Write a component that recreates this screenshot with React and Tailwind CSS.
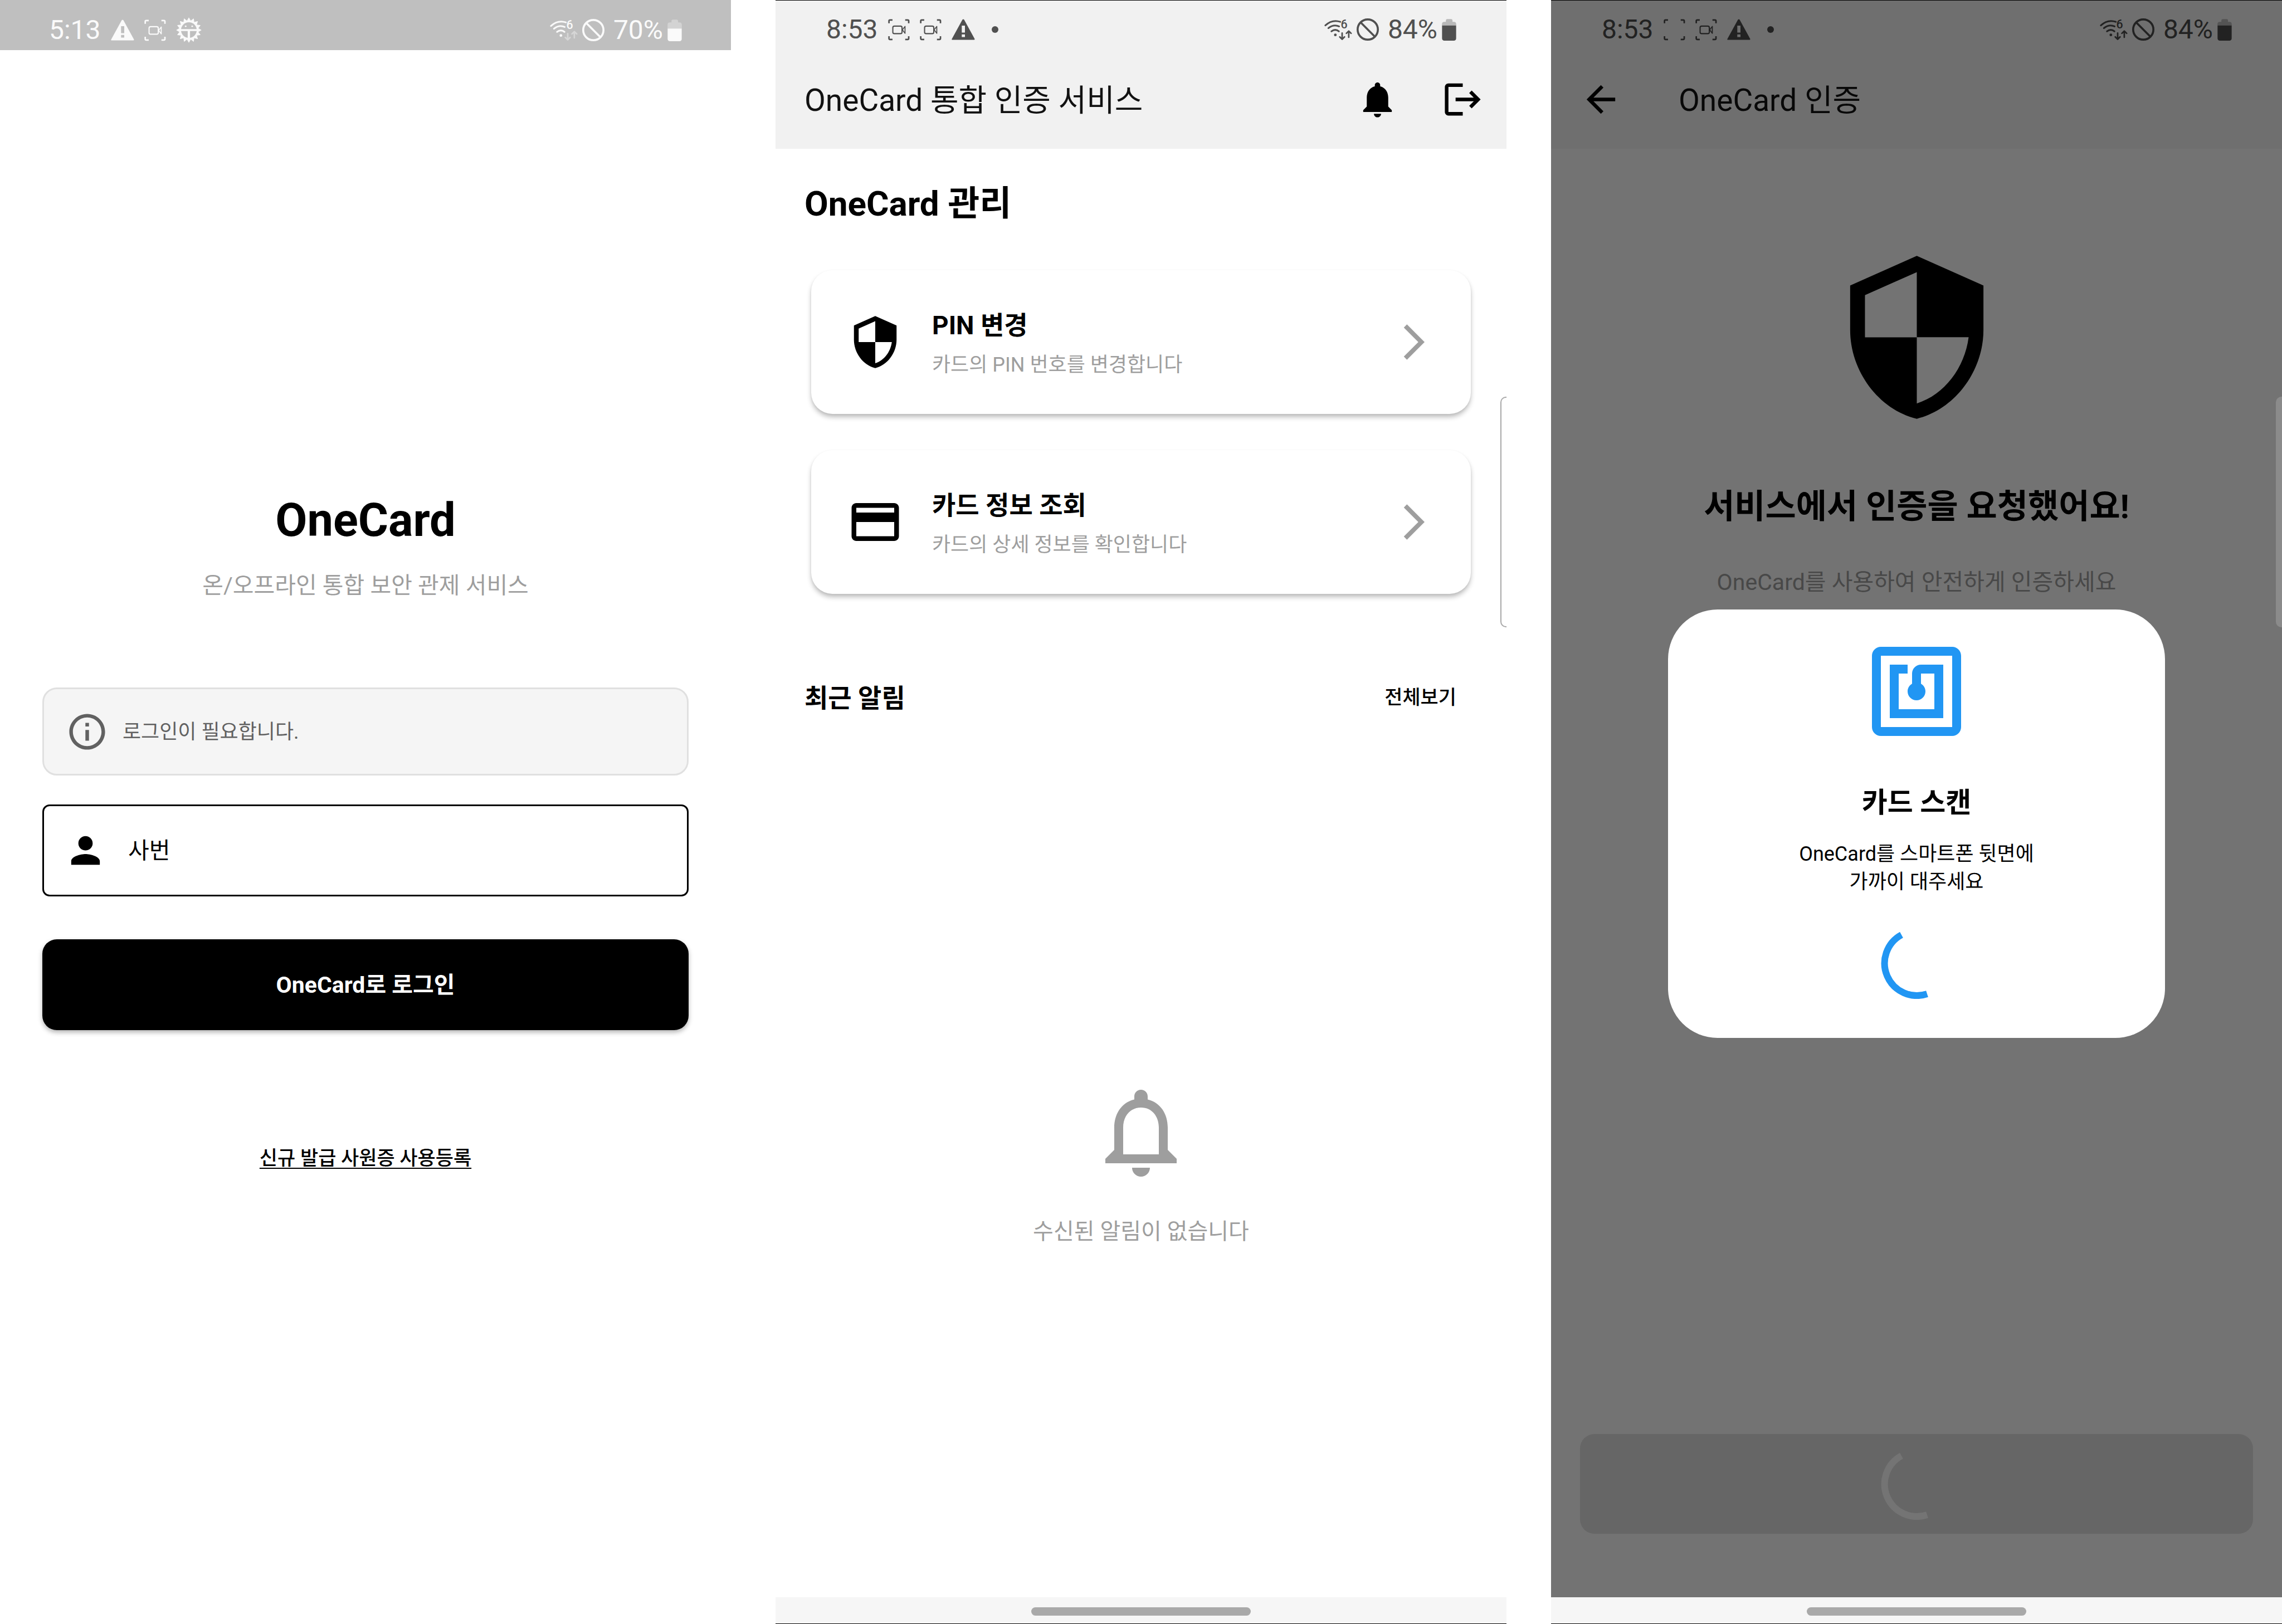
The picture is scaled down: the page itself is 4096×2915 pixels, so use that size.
const ICONS = {
  bell: "M12 22c1.1 0 2-.9 2-2h-4c0 1.1.89 2 2 2zm6-6v-5c0-3.07-1.64-5.64-4.5-6.32V4c0-.83-.67-1.5-1.5-1.5s-1.5.67-1.5 1.5v.68C7.63 5.36 6 7.92 6 11v5l-2 2v1h16v-1l-2-2z",
  bellOutline:
    "M12 22c1.1 0 2-.9 2-2h-4c0 1.1.9 2 2 2zm6-6v-5c0-3.07-1.63-5.64-4.5-6.32V4c0-.83-.67-1.5-1.5-1.5s-1.5.67-1.5 1.5v.68C7.64 5.36 6 7.92 6 11v5l-2 2v1h16v-1l-2-2zm-2 1H8v-6c0-2.48 1.51-4.5 4-4.5s4 2.02 4 4.5v6z",
  logout:
    "M17 7l-1.41 1.41L18.17 11H8v2h10.17l-2.58 2.58L17 17l5-5zM4 5h8V3H4c-1.1 0-2 .9-2 2v14c0 1.1.9 2 2 2h8v-2H4V5z",
  shield:
    "M12 1L3 5v6c0 5.55 3.84 10.74 9 12 5.16-1.26 9-6.45 9-12V5l-9-4zm0 10.99h7c-.53 4.12-3.28 7.79-7 8.94V12H5V6.3l7-3.11v8.8z",
  card: "M20 4H4c-1.11 0-1.99.89-1.99 2L2 18c0 1.11.89 2 2 2h16c1.11 0 2-.89 2-2V6c0-1.11-.89-2-2-2zm0 14H4v-6h16v6zm0-10H4V6h16v2z",
  chevron: "M6.23 20.23L8 22l10-10L8 2 6.23 3.77 14.46 12z",
  back: "M20 11H7.83l5.59-5.59L12 4l-8 8 8 8 1.41-1.41L7.83 13H20v-2z",
  nfc: "M20 2H4c-1.1 0-2 .9-2 2v16c0 1.1.9 2 2 2h16c1.1 0 2-.9 2-2V4c0-1.1-.9-2-2-2zm0 18H4V4h16v16zM18 6h-5c-1.1 0-2 .9-2 2v2.28c-.6.35-1 .98-1 1.72 0 1.1.9 2 2 2s2-.9 2-2c0-.74-.4-1.38-1-1.72V8h3v8H8V8h2V6H6v12h12V6z",
  info: "M11 7h2v2h-2zm0 4h2v6h-2zm1-9C6.48 2 2 6.48 2 12s4.48 10 10 10 10-4.48 10-10S17.52 2 12 2zm0 18c-4.41 0-8-3.59-8-8s3.59-8 8-8 8 3.59 8 8-3.59 8-8 8z",
  person:
    "M12 12c2.21 0 4-1.79 4-4s-1.79-4-4-4-4 1.79-4 4 1.79 4 4 4zm0 2c-2.67 0-8 1.34-8 4v2h16v-2c0-2.66-5.33-4-8-4z",
};

function Icon({ name, className }) {
  return (
    <svg viewBox="0 0 24 24" fill="currentColor" aria-hidden="true" className={`shrink-0 ${className}`}>
      <path d={ICONS[name]} />
    </svg>
  );
}

function WarningIcon() {
  return (
    <svg viewBox="416 86 140 126" fill="currentColor" aria-hidden="true" className="h-[38px] w-[42px]">
      <path
        fillRule="evenodd"
        d="M481 90q5-6 10 0l63 115q2 6-4 6H422q-7 0-4-6zM477 126v41h19v-41zM477 178v16h19v-16z"
      />
    </svg>
  );
}

function CaptureIcon({ empty }) {
  return (
    <svg viewBox="612 86 129 130" fill="none" stroke="currentColor" aria-hidden="true" className="h-[39px] w-[39px]">
      <path strokeWidth="9" d="M617 112V98q0-6 6-6h15M714 92h15q6 0 6 6v14M735 189v14q0 6-6 6h-15M638 209h-15q-6 0-6-6v-14" />
      {!empty && (
        <>
          <rect x="640" y="129" width="55" height="45" rx="9" strokeWidth="7" />
          <path strokeWidth="6" strokeLinejoin="round" d="M697 151l16-20v41z" />
        </>
      )}
    </svg>
  );
}

const GEAR_TEETH = Array.from({ length: 32 }, (_, i) => {
  const angle = (i * Math.PI) / 16 + Math.PI / 16;
  const radius = i % 2 ? 73 : 55;
  return `${(865 + radius * Math.cos(angle)).toFixed(1)},${(151 + radius * Math.sin(angle)).toFixed(1)}`;
}).join(" ");

function GearFaceIcon() {
  return (
    <svg viewBox="788 74 154 154" fill="currentColor" aria-hidden="true" className="h-[46px] w-[46px]">
      <mask id="gear-face">
        <rect x="788" y="74" width="154" height="154" fill="white" />
        <circle cx="865" cy="151" r="47" fill="black" />
      </mask>
      <polygon points={GEAR_TEETH} stroke="currentColor" strokeWidth="4" strokeLinejoin="round" mask="url(#gear-face)" />
      <path d="M816 145h98v12h-42v42h-14v-42h-42z" />
      <circle cx="846" cy="128" r="5" />
      <circle cx="885" cy="128" r="5" />
    </svg>
  );
}

function WifiIcon({ arrows }) {
  return (
    <svg
      viewBox="74 86 164 128"
      fill="none"
      stroke="currentColor"
      strokeLinecap="round"
      aria-hidden="true"
      className="h-[39px] w-[50px] overflow-visible"
    >
      <path strokeWidth="10" d="M80 124Q121 87 168 103M98 140Q130 115 161 130M116 159Q139 142 160 159" />
      <circle cx="139" cy="180" r="8" fill="currentColor" stroke="none" />
      <text x="171" y="143" fontSize="70" fontWeight="500" fill="currentColor" stroke="none">
        6
      </text>
      <path className={arrows} strokeWidth="9" strokeLinejoin="round" d="M179 169v36M165 192l14 14 14-14M218 194v-36M204 171l14-14 14 14" />
    </svg>
  );
}

function BlockIcon() {
  return (
    <svg viewBox="264 78 132 132" fill="none" stroke="currentColor" strokeWidth="12" aria-hidden="true" className="h-[40px] w-[40px]">
      <circle cx="330" cy="144" r="60" />
      <path d="M288 102l84 84" />
    </svg>
  );
}

function BatteryIcon({ level }) {
  const top = 212 - level * 1.05;
  return (
    <svg viewBox="765 85 84 128" fill="currentColor" aria-hidden="true" className="h-[39px] w-[26px]">
      <clipPath id={`battery-${level}`}>
        <rect x="765" y={top} width="84" height={213 - top} />
      </clipPath>
      <path opacity="0.35" d={`M788 102v-8q0-8 8-8h23q8 0 8 8v8h8q14 0 14 14V${top}H765V116q0-14 14-14z`} />
      <rect x="765" y="102" width="84" height="111" rx="14" clipPath={`url(#battery-${level})`} />
    </svg>
  );
}

function StatusBar({ time, level, children, arrows, className }) {
  return (
    <div className={`flex h-[90px] items-center justify-between text-[48px] leading-[56px] ${className}`}>
      <div className="flex items-center gap-[18px]">
        <span>{time}</span>
        {children}
      </div>
      <div className="flex items-center gap-2">
        <WifiIcon arrows={arrows} />
        <BlockIcon />
        <span className="pl-2">{level}%</span>
        <BatteryIcon level={level} />
      </div>
    </div>
  );
}

function Dot() {
  return <span className="ml-3 size-3 rounded-full bg-current" />;
}

function NavBar() {
  return (
    <div className="flex h-[48px] items-center justify-center border-b border-black bg-[#f6f6f6] pt-1">
      <div className="h-[15px] w-[30%] rounded-full bg-[#a9a9a9]" />
    </div>
  );
}

function Spinner({ className }) {
  return (
    <svg viewBox="0 0 128 128" fill="none" stroke="currentColor" strokeWidth="12" aria-hidden="true" className={`size-32 ${className}`}>
      <path d="M37 13A58 58 0 0 0 83 119" />
    </svg>
  );
}

function LoginScreen() {
  return (
    <section className="flex min-w-0 flex-1 flex-col bg-white">
      <StatusBar time="5:13" level={70} arrows="opacity-40" className="bg-[#bfbfbf] px-[88px] pt-[18px] text-[#fafafa]">
        <WarningIcon />
        <CaptureIcon />
        <GearFaceIcon />
      </StatusBar>
      <form className="flex flex-col px-[76px] pt-[796px]" onSubmit={(e) => e.preventDefault()}>
        <h1 className="text-center text-[83px] font-bold leading-[96px]">OneCard</h1>
        <p className="mt-[41px] text-center text-[41px] leading-[56px] text-[#9e9e9e]">온/오프라인 통합 보안 관제 서비스</p>
        <div className="mt-[155px] flex h-[158px] items-center gap-[25px] rounded-[26px] border-3 border-[#e0e0e0] bg-[#f5f5f5] px-[39px] text-[#616161]">
          <Icon name="info" className="size-[77px]" />
          <p className="pt-0.5 text-[36px] leading-[50px]">로그인이 필요합니다.</p>
        </div>
        <label className="mt-[52px] flex h-[165px] items-center gap-[38px] rounded-[13px] border-3 border-black px-9">
          <Icon name="person" className="size-[77px]" />
          <input
            aria-label="사번"
            placeholder="사번"
            className="min-w-0 flex-1 text-[41px] leading-[56px] outline-none placeholder:text-black placeholder:opacity-100"
          />
        </label>
        <button className="mt-[77px] h-[163px] rounded-[26px] bg-black text-[41px] font-bold leading-[56px] text-white shadow-[0_4px_8px_rgba(0,0,0,0.3)]">
          OneCard로 로그인
        </button>
        <a
          href="#register"
          className="mt-[206px] self-center text-[35px] font-medium leading-[50px] underline decoration-2 underline-offset-[5px] [text-decoration-skip-ink:none]"
        >
          신규 발급 사원증 사용등록
        </a>
      </form>
    </section>
  );
}

function MenuCard({ icon, title, description }) {
  return (
    <button className="flex h-[258px] items-center gap-[51px] rounded-[38px] bg-white px-16 text-left shadow-[0_6px_8px_rgba(0,0,0,0.24),0_2px_4px_rgba(0,0,0,0.05)]">
      <Icon name={icon} className="size-[102px]" />
      <span className="flex flex-1 flex-col gap-[14px] pt-1">
        <span className="text-[46px] font-bold leading-[64px]">{title}</span>
        <span className="text-[36px] leading-[50px] text-[#9e9e9e]">{description}</span>
      </span>
      <Icon name="chevron" className="size-[76px] text-[#9e9e9e]" />
    </button>
  );
}

function HomeScreen() {
  return (
    <section className="relative flex min-w-0 flex-1 flex-col bg-white">
      <header className="h-[267px] border-t border-black bg-[#f1f1f1]">
        <StatusBar time="8:53" level={84} arrows="" className="pl-[91px] pr-[90px] pt-[14px] text-[#505050]">
          <CaptureIcon />
          <CaptureIcon />
          <WarningIcon />
          <Dot />
        </StatusBar>
        <div className="flex h-[174px] items-center pl-[52px] pr-[40px]">
          <h1 className="flex-1 pt-1 text-[55px] leading-[64px] text-[#111]">OneCard 통합 인증 서비스</h1>
          <div className="flex items-center gap-[76px]">
            <button aria-label="알림">
              <Icon name="bell" className="size-[77px]" />
            </button>
            <button aria-label="로그아웃">
              <Icon name="logout" className="size-[77px]" />
            </button>
          </div>
        </div>
      </header>
      <main className="flex flex-1 flex-col pt-[63px]">
        <h2 className="px-[52px] text-[62px] font-bold leading-[72px]">OneCard 관리</h2>
        <div className="mt-[83px] flex flex-col gap-[65px] px-16">
          <MenuCard icon="shield" title="PIN 변경" description="카드의 PIN 번호를 변경합니다" />
          <MenuCard icon="card" title="카드 정보 조회" description="카드의 상세 정보를 확인합니다" />
        </div>
        <div className="mt-[157px] flex h-[60px] items-center justify-between pl-[52px] pr-[90px]">
          <h3 className="text-[46px] font-bold leading-[60px]">최근 알림</h3>
          <button className="text-[35px] font-medium leading-[50px]">전체보기</button>
        </div>
        <div className="flex flex-1 flex-col items-center justify-center gap-[55px] pt-6 text-[#9e9e9e]">
          <Icon name="bellOutline" className="size-48" />
          <p className="text-[40px] leading-[56px]">수신된 알림이 없습니다</p>
        </div>
      </main>
      <NavBar />
      <div className="absolute right-0 top-[712px] h-[414px] w-[11px] rounded-l-[10px] border-2 border-r-0 border-[#a8a8a8] bg-white" />
    </section>
  );
}

function AuthScreen() {
  return (
    <section className="relative flex min-w-0 flex-1 flex-col bg-[#737373]">
      <header className="h-[267px] border-t border-black bg-[#6f6f6f]">
        <StatusBar time="8:53" level={84} arrows="" className="pl-[91px] pr-[90px] pt-[14px] text-[#222]">
          <CaptureIcon empty />
          <CaptureIcon />
          <WarningIcon />
          <Dot />
        </StatusBar>
        <div className="flex h-[174px] items-center gap-[101px] px-[51px]">
          <button aria-label="뒤로">
            <Icon name="back" className="size-[77px]" />
          </button>
          <h1 className="pt-1 text-[55px] leading-[64px] text-[#080808]">OneCard 인증</h1>
        </div>
      </header>
      <main className="flex flex-1 flex-col items-center px-[52px] pb-[114px] pt-[179px]">
        <Icon name="shield" className="size-[319px]" />
        <h2 className="mt-[109px] text-[60px] font-bold leading-[72px]">서비스에서 인증을 요청했어요!</h2>
        <p className="mt-[71px] text-[41px] leading-[56px] text-[#484848]">OneCard를 사용하여 안전하게 인증하세요</p>
        <button
          disabled
          aria-label="인증 중"
          className="mt-auto flex h-[179px] w-full items-center justify-center rounded-[26px] bg-[#666]"
        >
          <Spinner className="text-[#747474]" />
        </button>
      </main>
      <NavBar />
      <div className="absolute right-0 top-[712px] h-[414px] w-[11px] rounded-l-[10px] bg-[#8b8b8b]" />
      <div className="absolute inset-x-0 bottom-[48px] top-[90px] grid place-items-center">
        <div
          role="dialog"
          aria-labelledby="scan-title"
          className="flex w-[68%] flex-col items-center rounded-[89px] bg-white pb-[70px] pt-[51px] text-center"
        >
          <Icon name="nfc" className="size-48 text-[#2196f3]" />
          <h2 id="scan-title" className="mt-[68px] text-[50px] font-bold leading-[72px]">
            카드 스캔
          </h2>
          <p className="mt-[31px] text-[36px] leading-[50px]">
            OneCard를 스마트폰 뒷면에
            <br />
            가까이 대주세요
          </p>
          <Spinner className="mt-[57px] text-[#2196f3]" />
        </div>
      </div>
    </section>
  );
}

export default function App() {
  return (
    <div lang="ko" className="flex min-h-screen gap-20 bg-white font-['Roboto','Noto_Sans_CJK_KR',sans-serif] text-black">
      <LoginScreen />
      <HomeScreen />
      <AuthScreen />
    </div>
  );
}
